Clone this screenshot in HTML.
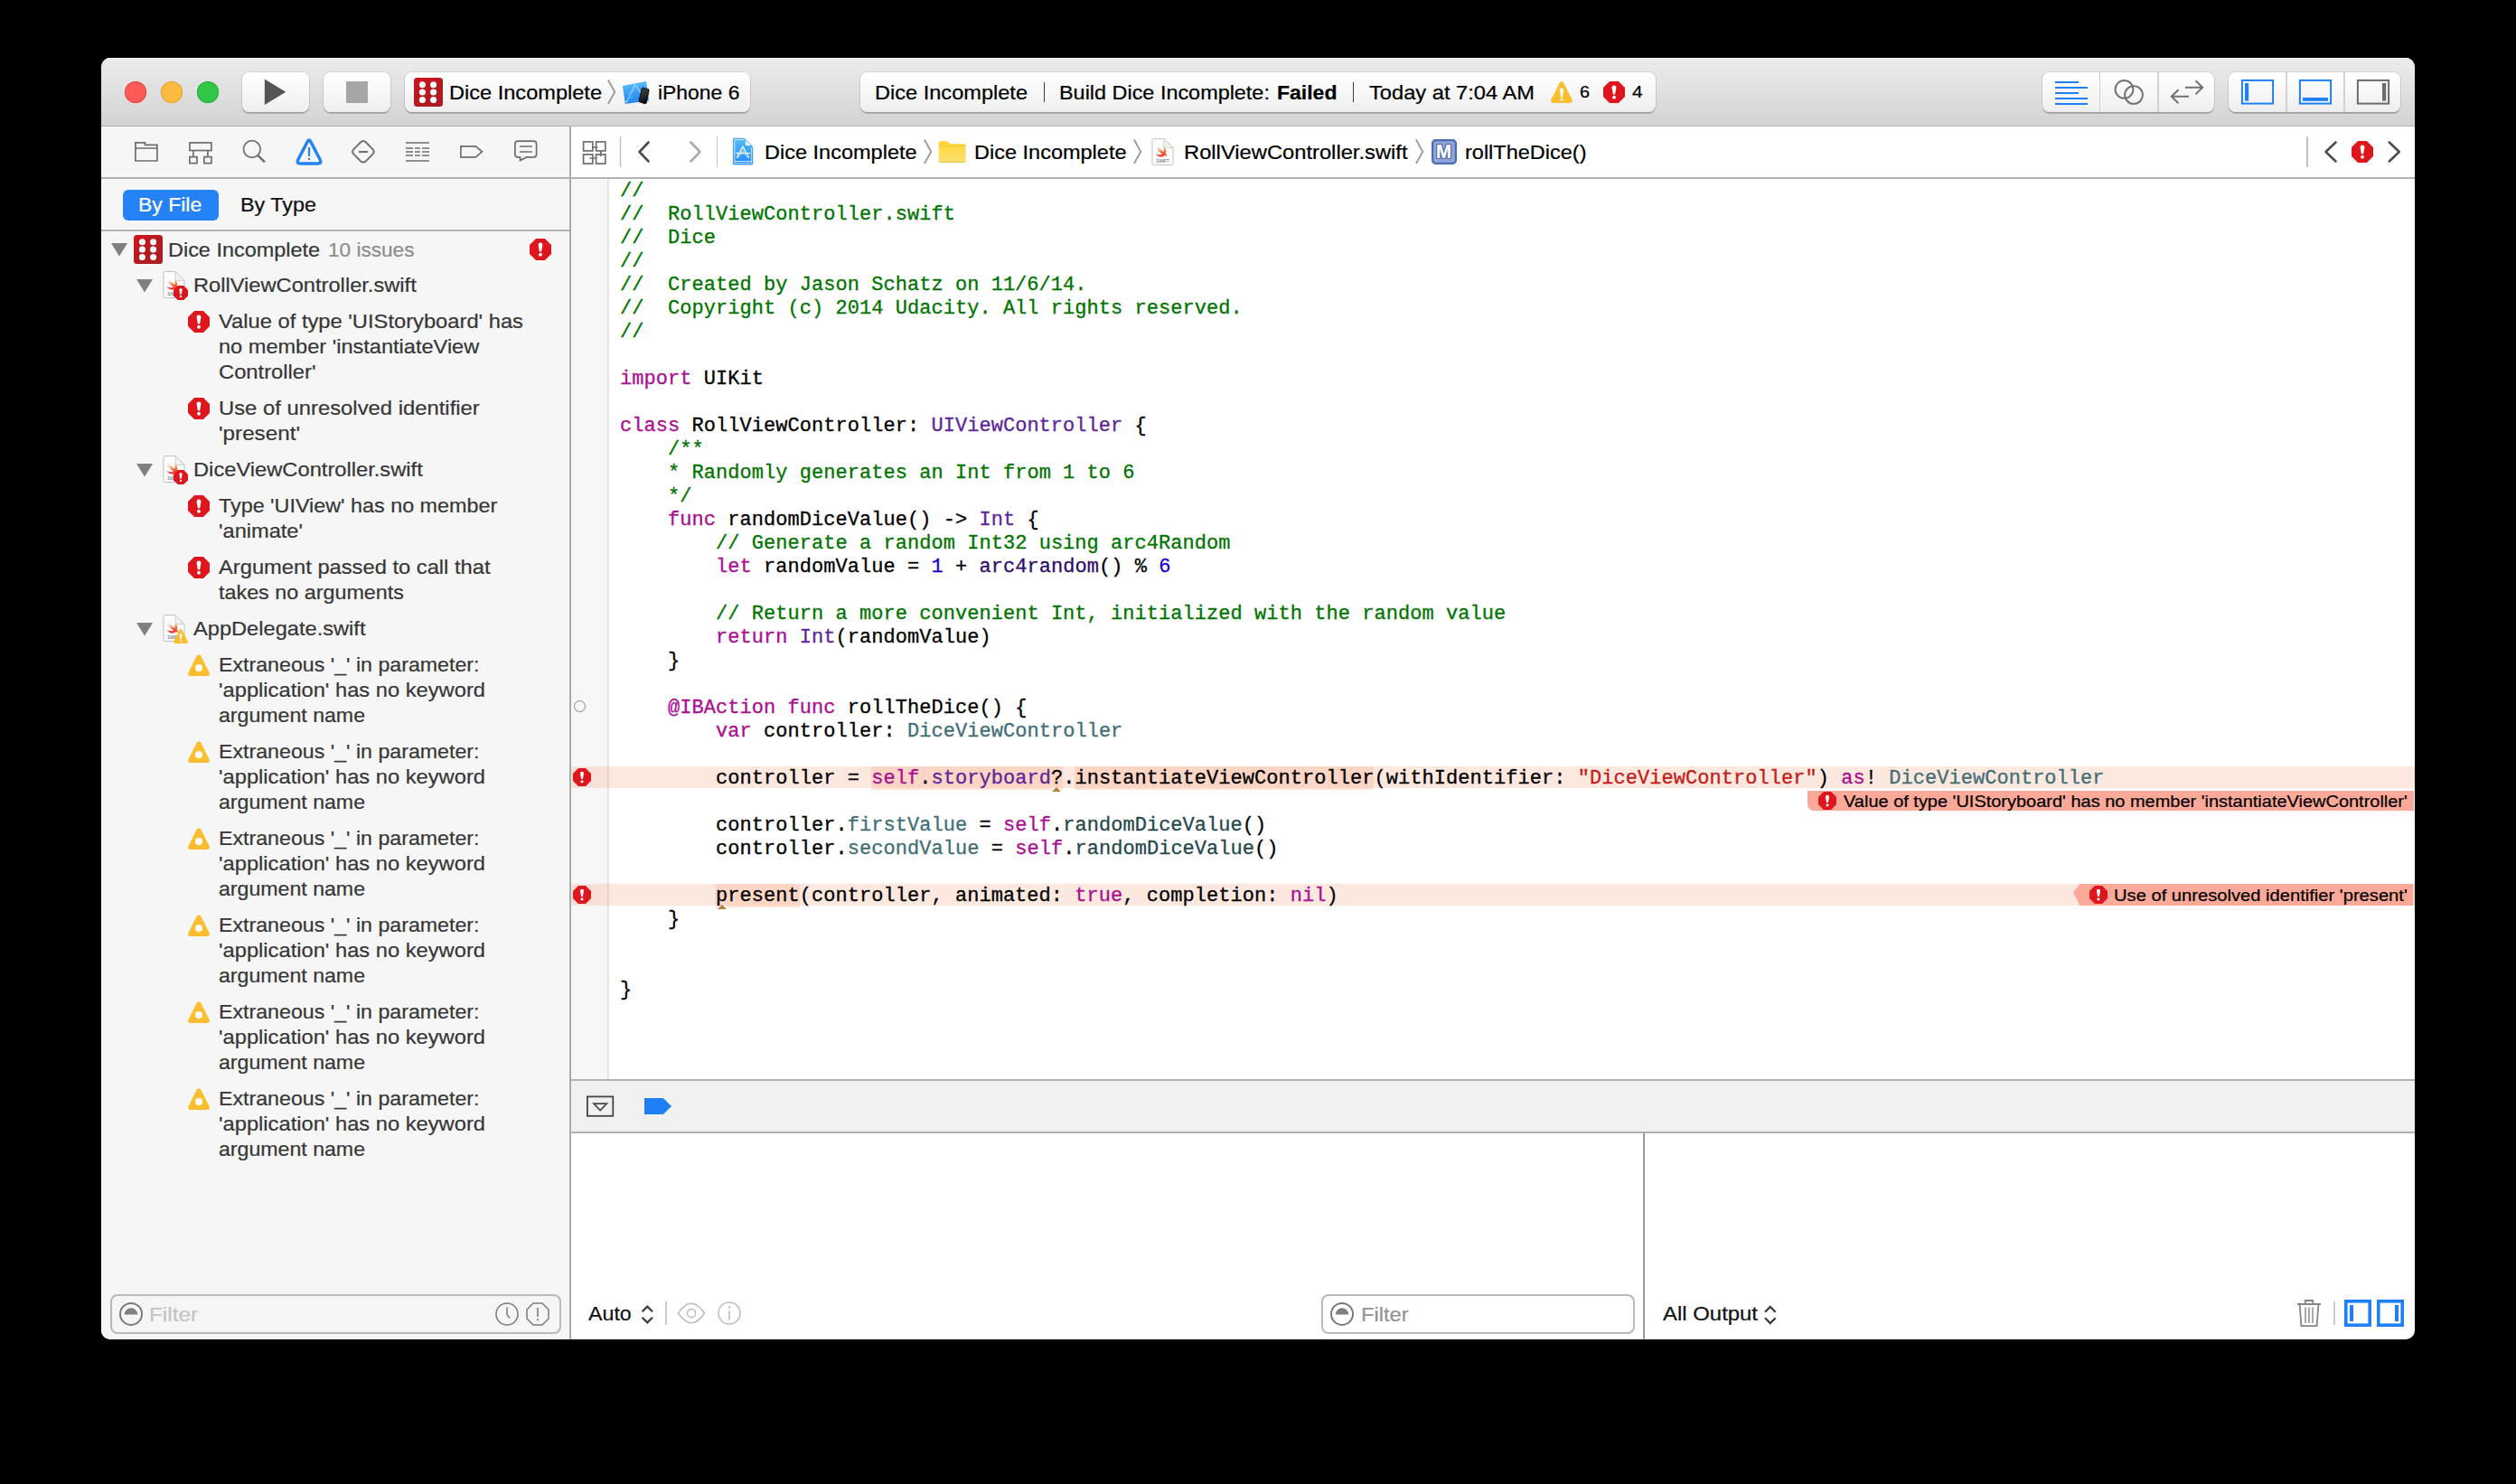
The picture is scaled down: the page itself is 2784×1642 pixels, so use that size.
<!DOCTYPE html>
<html><head><meta charset="utf-8"><title>Xcode</title>
<style>
html,body{margin:0;padding:0;background:#000;}
body{width:2784px;height:1642px;position:relative;overflow:hidden;font-family:"Liberation Sans",sans-serif;}
.ab{position:absolute;}
.t{white-space:pre;-webkit-text-stroke:0.22px;}
#win{position:absolute;left:112px;top:64px;width:2560px;height:1418px;border-radius:10px;overflow:hidden;background:#fff;}
#in{position:absolute;left:-112px;top:-64px;width:2784px;height:1642px;}
#tb{left:112px;top:64px;width:2560px;height:75px;background:linear-gradient(#ececec,#d3d3d3);box-shadow:inset 0 1px 0 #f6f6f6;}
.btn{position:absolute;top:80px;height:44px;border-radius:8px;background:linear-gradient(#ffffff,#f9f9f9 40%,#eeeeee);box-shadow:0 0 0 1px rgba(0,0,0,0.09),0 1.2px 0.8px rgba(0,0,0,0.2);}
.seg{position:absolute;top:0;width:1.8px;height:44px;background:#d2d2d2;}
#nav{left:112px;top:140px;width:519px;height:1342px;background:#f6f6f6;}
.hl{position:absolute;height:2px;background:#b3b3b3;}
.vl{position:absolute;width:2px;background:#ababab;}
.nt{color:#363636;font-size:22px;line-height:28px;white-space:pre;position:absolute;transform-origin:0 50%;-webkit-text-stroke:0.22px;}
pre#code{position:absolute;left:686px;top:199.3px;margin:0;font-family:"Liberation Mono",monospace;font-size:22px;line-height:26px;letter-spacing:0.044px;color:#000;-webkit-text-stroke:0.3px;}
.c{color:#007400}.k{color:#aa0d91}.ty{color:#5c2699}.fn{color:#2e0d6e}.pt{color:#3f6e74}.pf{color:#26474b}.n{color:#1c00cf}.s{color:#c41a16}
.rh{background:rgba(250,180,150,0.36);}
</style></head><body><div id="win"><div id="in">

<div class="ab" id="tb"></div>
<div class="ab" style="left:112px;top:138.6px;width:2560px;height:1.4px;background:#b0b0b0"></div>
<div class="ab" style="left:138px;top:90px;width:24px;height:24px;border-radius:12px;background:#fc5b57;box-shadow:inset 0 0 0 1px #e2443f"></div>
<div class="ab" style="left:178px;top:90px;width:24px;height:24px;border-radius:12px;background:#fdbc40;box-shadow:inset 0 0 0 1px #e0a133"></div>
<div class="ab" style="left:218px;top:90px;width:24px;height:24px;border-radius:12px;background:#33c748;box-shadow:inset 0 0 0 1px #27ab35"></div>
<div class="btn" style="left:268px;width:74px"><svg class="ab" style="left:24px;top:7px" width="26" height="30" viewBox="0 0 26 30"><polygon points="0.8,0.5 24.3,14.8 0.8,29" fill="#555"/></svg></div>
<div class="btn" style="left:358px;width:74px"><div class="ab" style="left:25px;top:10px;width:24px;height:24px;background:#a6a6a6"></div></div>
<div class="btn" style="left:448px;width:382px"></div>
<svg class="ab" style="left:458px;top:86px" width="32" height="32" viewBox="0 0 32 32"><defs><linearGradient id="dg45886" x1="0" y1="0" x2="1" y2="1"><stop offset="0" stop-color="#d3141d"/><stop offset="0.5" stop-color="#b51a20"/><stop offset="1" stop-color="#a91c22"/></linearGradient></defs><rect width="32" height="32" rx="3.5" fill="url(#dg45886)"/><g fill="#fff"><circle cx="9.4" cy="7.7" r="3.5"/><circle cx="21.6" cy="7.7" r="3.5"/><circle cx="9.4" cy="16" r="3.5"/><circle cx="21.6" cy="16" r="3.5"/><circle cx="9.4" cy="24.4" r="3.5"/><circle cx="21.6" cy="24.4" r="3.5"/></g></svg>
<div class="ab t " style="left:497.46px;top:87.8px;font-size:22px;color:#000;line-height:30px;transform:scaleX(1.0713);transform-origin:0 50%;">Dice Incomplete</div>
<svg class="ab" style="left:672px;top:88px" width="9.4" height="27.5" viewBox="0 0 9.4 27.5"><polyline points="0.9,0.4 8.25,13.75 0.9,27.1" fill="none" stroke="#a0a0a0" stroke-width="2.0"/></svg>
<svg class="ab" style="left:686px;top:86px" width="36" height="32" viewBox="686 86 36 32"><defs><linearGradient id="ip" x1="0" y1="0" x2="0.15" y2="1"><stop offset="0" stop-color="#5fc6fc"/><stop offset="0.45" stop-color="#3fa4f8"/><stop offset="1" stop-color="#1c82f5"/></linearGradient><linearGradient id="ph" x1="0" y1="0" x2="0.3" y2="1"><stop offset="0" stop-color="#141414"/><stop offset="0.25" stop-color="#3b3b3d"/><stop offset="0.7" stop-color="#232325"/><stop offset="1" stop-color="#050505"/></linearGradient></defs><polygon points="688.9,94.9 715,90 718,111.3 691.9,115.1" fill="url(#ip)"/><g stroke="#d3ecff" fill="none" opacity="0.45"><path d="M693.6 112.6 L702.6 93.8 L709.5 103.6" stroke-width="1.7"/><path d="M694.4 104.4 Q697 100.6 702 100.2 M697.4 108.6 L700.2 107.2" stroke-width="1"/><path d="M696 111.2 H707.5" stroke-width="0.7" opacity="0.6"/></g><rect x="692.6" y="111.6" width="1.6" height="1.8" fill="#eaf5ff"/><path d="M711.6 97.2 L717.2 98.6 Q718.3 99 718.1 100.2 L715.2 113.8 Q714.9 115 713.7 114.7 L708 112.9 Q706.8 112.5 707.1 111.3 L710.2 98 Q710.5 96.9 711.6 97.2 Z" fill="url(#ph)" stroke="#0a0604" stroke-width="0.9"/></svg>
<div class="ab t " style="left:727.75px;top:87.8px;font-size:22px;color:#000;line-height:30px;transform:scaleX(1.0414);transform-origin:0 50%;">iPhone 6</div>
<div class="btn" style="left:952px;width:880px"></div>
<div class="ab t " style="left:967.71px;top:87.8px;font-size:22px;color:#000;line-height:30px;transform:scaleX(1.0713);transform-origin:0 50%;">Dice Incomplete</div>
<div class="ab" style="left:1154.5px;top:91px;width:1.5px;height:22px;background:#3a3a3a"></div>
<div class="ab t " style="left:1171.72px;top:87.8px;font-size:22px;color:#000;line-height:30px;transform:scaleX(1.064);transform-origin:0 50%;">Build Dice Incomplete:</div>
<div class="ab t " style="left:1412.75px;top:87.8px;font-size:22px;color:#000;line-height:30px;transform:scaleX(1.0454);transform-origin:0 50%;font-weight:bold;">Failed</div>
<div class="ab" style="left:1496.5px;top:91px;width:1.5px;height:22px;background:#3a3a3a"></div>
<div class="ab t " style="left:1515.28px;top:87.8px;font-size:22px;color:#000;line-height:30px;transform:scaleX(1.0761);transform-origin:0 50%;">Today at 7:04 AM</div>
<svg class="ab" style="left:1716px;top:90px" width="24" height="24" viewBox="0 0 24 24"><path d="M12 2.9 L21.3 21.3 L2.7 21.3 Z" fill="#fcbd2e" stroke="#fcbd2e" stroke-width="5.2" stroke-linejoin="round"/><path d="M10 9.6 Q10 7.2 12 7.2 Q14 7.2 14 9.6 L13 17.4 L11 17.4 Z" fill="#fff"/><rect x="10.5" y="18.7" width="3" height="2.8" rx="1" fill="#fff"/></svg>
<div class="ab t " style="left:1747.92px;top:86.8px;font-size:18px;color:#000;line-height:30px;transform:scaleX(1.1048);transform-origin:0 50%;">6</div>
<svg class="ab" style="left:1774px;top:90px" width="24" height="24" viewBox="0 0 24 24"><polygon points="7.1,0 16.9,0 24,7.1 24,16.9 16.9,24 7.1,24 0,16.9 0,7.1" fill="#de161e"/><path d="M9.6 7 Q9.6 4.4 12 4.4 Q14.4 4.4 14.4 7 L13.1 14.5 L10.9 14.5 Z" fill="#fff"/><rect x="10.3" y="16.1" width="3.4" height="3.3" rx="1.2" fill="#fff"/></svg>
<div class="ab t " style="left:1805.56px;top:86.8px;font-size:18px;color:#000;line-height:30px;transform:scaleX(1.1612);transform-origin:0 50%;">4</div>
<div class="btn" style="left:2260px;width:190px"><div class="seg" style="left:62.6px"></div><div class="seg" style="left:126.8px"></div></div>
<svg class="ab" style="left:2272px;top:88px" width="40" height="30" viewBox="2272 88 40 30"><g stroke="#1f7ff6" stroke-width="1.9"><path d="M2274 91H2300M2274 97H2310M2274 103H2300M2274 109H2310M2274 115H2310"/></g></svg>
<svg class="ab" style="left:2336px;top:84px" width="40" height="36" viewBox="2336 84 40 36"><g stroke="#707070" stroke-width="1.9" fill="none"><circle cx="2350.5" cy="98.9" r="9.9"/><circle cx="2361" cy="105" r="9.9"/></g></svg>
<svg class="ab" style="left:2398px;top:84px" width="44" height="36" viewBox="2398 84 44 36"><g stroke="#707070" stroke-width="1.9" fill="none"><path d="M2418 96.8H2437M2429.5 89.3L2437.2 96.8L2429.5 104.3"/><path d="M2422 106.8H2403M2410.5 99.3L2402.8 106.8L2410.5 114.3"/></g></svg>
<div class="btn" style="left:2466px;width:190px"><div class="seg" style="left:62.8px"></div><div class="seg" style="left:127px"></div></div>
<svg class="ab" style="left:2476px;top:84px" width="172" height="36" viewBox="2476 84 172 36"><g fill="none" stroke-width="2"><rect x="2480.9" y="88.9" width="34.2" height="25.7" stroke="#1f7ff6"/><rect x="2544.9" y="88.9" width="34.2" height="25.7" stroke="#1f7ff6"/><rect x="2608.9" y="88.9" width="34.2" height="25.7" stroke="#6b6b6b"/></g><rect x="2484" y="92" width="4.2" height="19.6" fill="#1f7ff6"/><rect x="2548" y="108" width="28" height="3.8" fill="#1f7ff6"/><rect x="2636" y="92" width="4.2" height="19.6" fill="#6b6b6b"/></svg>
<div class="ab" id="nav"></div>
<div class="vl" style="left:630px;top:140px;height:1342px"></div>
<div class="hl" style="left:112px;top:196px;width:518px"></div>
<div class="hl" style="left:112px;top:254px;width:518px"></div>
<svg class="ab" style="left:140px;top:148px" width="470" height="40" viewBox="140 148 470 40"><g fill="none" stroke="#6e6e6e" stroke-width="1.7">
<path d="M149.9 178 V157.9 H160.4 V160.3 H173.9 V178 Z M149.9 164 H173.9"/>
<rect x="209.9" y="157.9" width="24" height="8.6"/><rect x="209.9" y="173.6" width="8" height="7"/><rect x="225.9" y="173.6" width="8" height="7"/><path d="M213.9 166.5V173.6M229.9 166.5V173.6"/>
<circle cx="278.8" cy="165" r="9.3"/><path d="M285.2 171.8 L293 179.4" stroke-width="2.4"/>
<path d="M397 167.95H407" stroke-width="1.9"/><path d="M398.90 157.50 Q401.9 154.5 404.90 157.50 L412.20 164.80 Q415.2 167.8 412.20 170.80 L404.90 178.10 Q401.9 181.10000000000002 398.90 178.10 L391.60 170.80 Q388.59999999999997 167.8 391.60 164.80 Z" stroke-width="1.9"/>
<path d="M449 158H475M449 178H475" /><path d="M449 164H457M459 164H465M467 164H475M449 168H457M459 168H465M467 168H475M449 172H457M459 172H465M467 172H475"/>
<path d="M509.9 161.9 H526.4 L533.4 167.8 L526.4 173.8 H509.9 Z"/>
<path d="M573 156.2 H590.5 Q593.6 156.2 593.6 159.3 V170.8 Q593.6 173.9 590.5 173.9 H582.5 L575.6 177.6 V173.9 H573 Q569.9 173.9 569.9 170.8 V159.3 Q569.9 156.2 573 156.2 Z"/><path d="M575 162H588.8M575 168H588.8"/>
</g>
<g fill="none" stroke="#2383f6"><path d="M340.34 156.49 Q342 153.3 343.66 156.49 L354.10 176.49 Q356.5 181.1 351.30 181.10 L332.70 181.10 Q327.5 181.1 329.90 176.49 Z" stroke-width="3.5" stroke-linejoin="round"/><path d="M342 162.9V172.9" stroke-width="2.1"/><rect x="340.95" y="175" width="2.1" height="2.1" fill="#2383f6" stroke="none"/></g>
</svg>
<div class="ab" style="left:136px;top:210px;width:106px;height:34px;border-radius:6px;background:#2581f6"></div>
<div class="ab t " style="left:153.25px;top:211.9px;font-size:22px;color:#fff;line-height:30px;transform:scaleX(1.044);transform-origin:0 50%;">By File</div>
<div class="ab t " style="left:266.23px;top:211.9px;font-size:22px;color:#111;line-height:30px;transform:scaleX(1.0619);transform-origin:0 50%;">By Type</div>
<svg class="ab" style="left:123px;top:269px" width="18" height="14.5" viewBox="0 0 18 14.5"><polygon points="0,0 18,0 9.0,14.5" fill="#808080"/></svg>
<svg class="ab" style="left:148px;top:260px" width="32" height="32" viewBox="0 0 32 32"><defs><linearGradient id="dg148260" x1="0" y1="0" x2="1" y2="1"><stop offset="0" stop-color="#d3141d"/><stop offset="0.5" stop-color="#b51a20"/><stop offset="1" stop-color="#a91c22"/></linearGradient></defs><rect width="32" height="32" rx="3.5" fill="url(#dg148260)"/><g fill="#fff"><circle cx="9.4" cy="7.7" r="3.5"/><circle cx="21.6" cy="7.7" r="3.5"/><circle cx="9.4" cy="16" r="3.5"/><circle cx="21.6" cy="16" r="3.5"/><circle cx="9.4" cy="24.4" r="3.5"/><circle cx="21.6" cy="24.4" r="3.5"/></g></svg>
<div class="nt" style="left:185.7px;top:262.5px;transform:scaleX(1.065)">Dice Incomplete</div>
<div class="nt" style="left:362.5px;top:262.5px;color:#8c8c8c;transform:scaleX(1.0274)">10 issues</div>
<svg class="ab" style="left:586px;top:264px" width="24" height="24" viewBox="0 0 24 24"><polygon points="7.1,0 16.9,0 24,7.1 24,16.9 16.9,24 7.1,24 0,16.9 0,7.1" fill="#de161e"/><path d="M9.6 7 Q9.6 4.4 12 4.4 Q14.4 4.4 14.4 7 L13.1 14.5 L10.9 14.5 Z" fill="#fff"/><rect x="10.3" y="16.1" width="3.4" height="3.3" rx="1.2" fill="#fff"/></svg>
<svg class="ab" style="left:151px;top:309px" width="18" height="14.5" viewBox="0 0 18 14.5"><polygon points="0,0 18,0 9.0,14.5" fill="#808080"/></svg>
<svg class="ab" style="left:180.3px;top:299.4px" width="25.5" height="32" viewBox="-1 -1 25.5 32"><defs><linearGradient id="sw180_299" x1="0.7" y1="0" x2="0.3" y2="1"><stop offset="0" stop-color="#fc9a3c"/><stop offset="0.55" stop-color="#f9512f"/><stop offset="1" stop-color="#f3262b"/></linearGradient></defs><path d="M1.2 0.5 H13 L23 10.5 V28.3 Q23 29.5 21.8 29.5 H1.2 Q0 29.5 0 28.3 V1.7 Q0 0.5 1.2 0.5 Z" fill="#fdfdfd" stroke="#c2c2c2" stroke-width="1"/><path d="M13 0.5 V8.8 Q13 10.5 14.7 10.5 H23 Z" fill="#f1f1f1" stroke="#c6c6c6" stroke-width="0.8"/><g transform="translate(3.5,8.1) scale(0.145)"><path d="M62 8 C78 22 86 44 78 62 C84 68 90 78 88 86 C84 78 78 74 72 76 C60 86 40 90 24 82 C14 77 6 68 2 60 C18 72 38 74 52 64 C36 52 20 36 8 18 C22 32 38 44 50 52 C38 40 26 26 18 12 C32 26 48 40 60 48 C66 36 66 20 62 8 Z" fill="url(#sw180_299)"/></g><text x="11.5" y="26.8" font-family="Liberation Sans" font-size="4.8" fill="#5a5a5a" text-anchor="middle" letter-spacing="-0.1">SWIFT</text></svg>
<svg class="ab" style="left:192px;top:316px" width="16" height="16" viewBox="0 0 24 24"><polygon points="7.1,0 16.9,0 24,7.1 24,16.9 16.9,24 7.1,24 0,16.9 0,7.1" fill="#de161e"/><path d="M9.6 7 Q9.6 4.4 12 4.4 Q14.4 4.4 14.4 7 L13.1 14.5 L10.9 14.5 Z" fill="#fff"/><rect x="10.3" y="16.1" width="3.4" height="3.3" rx="1.2" fill="#fff"/></svg>
<div class="nt" style="left:213.8px;top:302.4px;transform:scaleX(1.0754)">RollViewController.swift</div>
<svg class="ab" style="left:208px;top:344px" width="24" height="24" viewBox="0 0 24 24"><polygon points="7.1,0 16.9,0 24,7.1 24,16.9 16.9,24 7.1,24 0,16.9 0,7.1" fill="#de161e"/><path d="M9.6 7 Q9.6 4.4 12 4.4 Q14.4 4.4 14.4 7 L13.1 14.5 L10.9 14.5 Z" fill="#fff"/><rect x="10.3" y="16.1" width="3.4" height="3.3" rx="1.2" fill="#fff"/></svg>
<div class="nt" style="left:241.7px;top:342.4px;transform:scaleX(1.0783)">Value of type 'UIStoryboard' has</div><div class="nt" style="left:241.7px;top:370.4px;transform:scaleX(1.0709)">no member 'instantiateView</div><div class="nt" style="left:241.7px;top:398.4px;transform:scaleX(1.0796)">Controller'</div>
<svg class="ab" style="left:208px;top:440px" width="24" height="24" viewBox="0 0 24 24"><polygon points="7.1,0 16.9,0 24,7.1 24,16.9 16.9,24 7.1,24 0,16.9 0,7.1" fill="#de161e"/><path d="M9.6 7 Q9.6 4.4 12 4.4 Q14.4 4.4 14.4 7 L13.1 14.5 L10.9 14.5 Z" fill="#fff"/><rect x="10.3" y="16.1" width="3.4" height="3.3" rx="1.2" fill="#fff"/></svg>
<div class="nt" style="left:241.7px;top:438.4px;transform:scaleX(1.0831)">Use of unresolved identifier</div><div class="nt" style="left:241.7px;top:466.4px;transform:scaleX(1.1005)">'present'</div>
<svg class="ab" style="left:151px;top:513px" width="18" height="14.5" viewBox="0 0 18 14.5"><polygon points="0,0 18,0 9.0,14.5" fill="#808080"/></svg>
<svg class="ab" style="left:180.3px;top:503.4px" width="25.5" height="32" viewBox="-1 -1 25.5 32"><defs><linearGradient id="sw180_503" x1="0.7" y1="0" x2="0.3" y2="1"><stop offset="0" stop-color="#fc9a3c"/><stop offset="0.55" stop-color="#f9512f"/><stop offset="1" stop-color="#f3262b"/></linearGradient></defs><path d="M1.2 0.5 H13 L23 10.5 V28.3 Q23 29.5 21.8 29.5 H1.2 Q0 29.5 0 28.3 V1.7 Q0 0.5 1.2 0.5 Z" fill="#fdfdfd" stroke="#c2c2c2" stroke-width="1"/><path d="M13 0.5 V8.8 Q13 10.5 14.7 10.5 H23 Z" fill="#f1f1f1" stroke="#c6c6c6" stroke-width="0.8"/><g transform="translate(3.5,8.1) scale(0.145)"><path d="M62 8 C78 22 86 44 78 62 C84 68 90 78 88 86 C84 78 78 74 72 76 C60 86 40 90 24 82 C14 77 6 68 2 60 C18 72 38 74 52 64 C36 52 20 36 8 18 C22 32 38 44 50 52 C38 40 26 26 18 12 C32 26 48 40 60 48 C66 36 66 20 62 8 Z" fill="url(#sw180_503)"/></g><text x="11.5" y="26.8" font-family="Liberation Sans" font-size="4.8" fill="#5a5a5a" text-anchor="middle" letter-spacing="-0.1">SWIFT</text></svg>
<svg class="ab" style="left:192px;top:520px" width="16" height="16" viewBox="0 0 24 24"><polygon points="7.1,0 16.9,0 24,7.1 24,16.9 16.9,24 7.1,24 0,16.9 0,7.1" fill="#de161e"/><path d="M9.6 7 Q9.6 4.4 12 4.4 Q14.4 4.4 14.4 7 L13.1 14.5 L10.9 14.5 Z" fill="#fff"/><rect x="10.3" y="16.1" width="3.4" height="3.3" rx="1.2" fill="#fff"/></svg>
<div class="nt" style="left:213.8px;top:506.4px;transform:scaleX(1.0771)">DiceViewController.swift</div>
<svg class="ab" style="left:208px;top:548px" width="24" height="24" viewBox="0 0 24 24"><polygon points="7.1,0 16.9,0 24,7.1 24,16.9 16.9,24 7.1,24 0,16.9 0,7.1" fill="#de161e"/><path d="M9.6 7 Q9.6 4.4 12 4.4 Q14.4 4.4 14.4 7 L13.1 14.5 L10.9 14.5 Z" fill="#fff"/><rect x="10.3" y="16.1" width="3.4" height="3.3" rx="1.2" fill="#fff"/></svg>
<div class="nt" style="left:241.7px;top:546.4px;transform:scaleX(1.0612)">Type 'UIView' has no member</div><div class="nt" style="left:241.7px;top:574.4px;transform:scaleX(1.073)">'animate'</div>
<svg class="ab" style="left:208px;top:616px" width="24" height="24" viewBox="0 0 24 24"><polygon points="7.1,0 16.9,0 24,7.1 24,16.9 16.9,24 7.1,24 0,16.9 0,7.1" fill="#de161e"/><path d="M9.6 7 Q9.6 4.4 12 4.4 Q14.4 4.4 14.4 7 L13.1 14.5 L10.9 14.5 Z" fill="#fff"/><rect x="10.3" y="16.1" width="3.4" height="3.3" rx="1.2" fill="#fff"/></svg>
<div class="nt" style="left:241.7px;top:614.4px;transform:scaleX(1.0777)">Argument passed to call that</div><div class="nt" style="left:241.7px;top:642.4px;transform:scaleX(1.0609)">takes no arguments</div>
<svg class="ab" style="left:151px;top:689px" width="18" height="14.5" viewBox="0 0 18 14.5"><polygon points="0,0 18,0 9.0,14.5" fill="#808080"/></svg>
<svg class="ab" style="left:180.3px;top:679.4px" width="25.5" height="32" viewBox="-1 -1 25.5 32"><defs><linearGradient id="sw180_679" x1="0.7" y1="0" x2="0.3" y2="1"><stop offset="0" stop-color="#fc9a3c"/><stop offset="0.55" stop-color="#f9512f"/><stop offset="1" stop-color="#f3262b"/></linearGradient></defs><path d="M1.2 0.5 H13 L23 10.5 V28.3 Q23 29.5 21.8 29.5 H1.2 Q0 29.5 0 28.3 V1.7 Q0 0.5 1.2 0.5 Z" fill="#fdfdfd" stroke="#c2c2c2" stroke-width="1"/><path d="M13 0.5 V8.8 Q13 10.5 14.7 10.5 H23 Z" fill="#f1f1f1" stroke="#c6c6c6" stroke-width="0.8"/><g transform="translate(3.5,8.1) scale(0.145)"><path d="M62 8 C78 22 86 44 78 62 C84 68 90 78 88 86 C84 78 78 74 72 76 C60 86 40 90 24 82 C14 77 6 68 2 60 C18 72 38 74 52 64 C36 52 20 36 8 18 C22 32 38 44 50 52 C38 40 26 26 18 12 C32 26 48 40 60 48 C66 36 66 20 62 8 Z" fill="url(#sw180_679)"/></g><text x="11.5" y="26.8" font-family="Liberation Sans" font-size="4.8" fill="#5a5a5a" text-anchor="middle" letter-spacing="-0.1">SWIFT</text></svg>
<svg class="ab" style="left:192px;top:696px" width="16" height="16" viewBox="0 0 24 24"><path d="M12 2.9 L21.3 21.3 L2.7 21.3 Z" fill="#fcbd2e" stroke="#fcbd2e" stroke-width="5.2" stroke-linejoin="round"/><path d="M10 9.6 Q10 7.2 12 7.2 Q14 7.2 14 9.6 L13 17.4 L11 17.4 Z" fill="#fff"/><rect x="10.5" y="18.7" width="3" height="2.8" rx="1" fill="#fff"/></svg>
<div class="nt" style="left:213.8px;top:682.4px;transform:scaleX(1.0743)">AppDelegate.swift</div>
<svg class="ab" style="left:208px;top:724px" width="24" height="24" viewBox="0 0 24 24"><path d="M12 2.9 L21.3 21.3 L2.7 21.3 Z" fill="#fcbd2e" stroke="#fcbd2e" stroke-width="5.2" stroke-linejoin="round"/><circle cx="12" cy="14.9" r="4" fill="#fff"/></svg>
<div class="nt" style="left:241.7px;top:722.4px;transform:scaleX(1.0538)">Extraneous '_' in parameter:</div><div class="nt" style="left:241.7px;top:750.4px;transform:scaleX(1.0774)">'application' has no keyword</div><div class="nt" style="left:241.7px;top:778.4px;transform:scaleX(1.0513)">argument name</div>
<svg class="ab" style="left:208px;top:820px" width="24" height="24" viewBox="0 0 24 24"><path d="M12 2.9 L21.3 21.3 L2.7 21.3 Z" fill="#fcbd2e" stroke="#fcbd2e" stroke-width="5.2" stroke-linejoin="round"/><circle cx="12" cy="14.9" r="4" fill="#fff"/></svg>
<div class="nt" style="left:241.7px;top:818.4px;transform:scaleX(1.0538)">Extraneous '_' in parameter:</div><div class="nt" style="left:241.7px;top:846.4px;transform:scaleX(1.0774)">'application' has no keyword</div><div class="nt" style="left:241.7px;top:874.4px;transform:scaleX(1.0513)">argument name</div>
<svg class="ab" style="left:208px;top:916px" width="24" height="24" viewBox="0 0 24 24"><path d="M12 2.9 L21.3 21.3 L2.7 21.3 Z" fill="#fcbd2e" stroke="#fcbd2e" stroke-width="5.2" stroke-linejoin="round"/><circle cx="12" cy="14.9" r="4" fill="#fff"/></svg>
<div class="nt" style="left:241.7px;top:914.4px;transform:scaleX(1.0538)">Extraneous '_' in parameter:</div><div class="nt" style="left:241.7px;top:942.4px;transform:scaleX(1.0774)">'application' has no keyword</div><div class="nt" style="left:241.7px;top:970.4px;transform:scaleX(1.0513)">argument name</div>
<svg class="ab" style="left:208px;top:1012px" width="24" height="24" viewBox="0 0 24 24"><path d="M12 2.9 L21.3 21.3 L2.7 21.3 Z" fill="#fcbd2e" stroke="#fcbd2e" stroke-width="5.2" stroke-linejoin="round"/><circle cx="12" cy="14.9" r="4" fill="#fff"/></svg>
<div class="nt" style="left:241.7px;top:1010.4px;transform:scaleX(1.0538)">Extraneous '_' in parameter:</div><div class="nt" style="left:241.7px;top:1038.4px;transform:scaleX(1.0774)">'application' has no keyword</div><div class="nt" style="left:241.7px;top:1066.4px;transform:scaleX(1.0513)">argument name</div>
<svg class="ab" style="left:208px;top:1108px" width="24" height="24" viewBox="0 0 24 24"><path d="M12 2.9 L21.3 21.3 L2.7 21.3 Z" fill="#fcbd2e" stroke="#fcbd2e" stroke-width="5.2" stroke-linejoin="round"/><circle cx="12" cy="14.9" r="4" fill="#fff"/></svg>
<div class="nt" style="left:241.7px;top:1106.4px;transform:scaleX(1.0538)">Extraneous '_' in parameter:</div><div class="nt" style="left:241.7px;top:1134.4px;transform:scaleX(1.0774)">'application' has no keyword</div><div class="nt" style="left:241.7px;top:1162.4px;transform:scaleX(1.0513)">argument name</div>
<svg class="ab" style="left:208px;top:1204px" width="24" height="24" viewBox="0 0 24 24"><path d="M12 2.9 L21.3 21.3 L2.7 21.3 Z" fill="#fcbd2e" stroke="#fcbd2e" stroke-width="5.2" stroke-linejoin="round"/><circle cx="12" cy="14.9" r="4" fill="#fff"/></svg>
<div class="nt" style="left:241.7px;top:1202.4px;transform:scaleX(1.0538)">Extraneous '_' in parameter:</div><div class="nt" style="left:241.7px;top:1230.4px;transform:scaleX(1.0774)">'application' has no keyword</div><div class="nt" style="left:241.7px;top:1258.4px;transform:scaleX(1.0513)">argument name</div>
<div class="ab" style="left:121.5px;top:1432px;width:495px;height:40px;border-radius:8px;border:2px solid #b9b9b9;background:#f5f5f5"></div>
<svg class="ab" style="left:130px;top:1439px" width="30" height="30" viewBox="0 0 30 30"><circle cx="15" cy="14.9" r="12" fill="none" stroke="#787878" stroke-width="2"/><path d="M7.7 15.6 A7.3 7.3 0 0 1 22.3 15.6 Z" fill="#7f7f7f"/></svg>
<div class="ab t " style="left:165.17px;top:1440.2px;font-size:22px;color:#c4c4c4;line-height:30px;transform:scaleX(1.1055);transform-origin:0 50%;">Filter</div>
<svg class="ab" style="left:546px;top:1439px" width="70" height="30" viewBox="546 1439 70 30"><g fill="none" stroke="#7b7b7b" stroke-width="1.5"><circle cx="561" cy="1454" r="12"/><path d="M561 1446.5V1454.5L564 1458.5"/><polygon points="590,1442 600,1442 607,1449 607,1459 600,1466 590,1466 583,1459 583,1449"/><path d="M595 1447V1457" stroke-width="1.6"/></g><rect x="594.1" y="1459.2" width="1.8" height="1.9" fill="#7b7b7b"/></svg>
<div class="hl" style="left:632px;top:196px;width:2040px"></div>
<svg class="ab" style="left:640px;top:148px" width="150" height="40" viewBox="640 148 150 40"><g fill="none" stroke="#6e6e6e" stroke-width="1.7"><rect x="645.6" y="156.9" width="10.2" height="10"/><rect x="659.6" y="156.9" width="10.2" height="10"/><rect x="645.6" y="170.9" width="10.2" height="10.2"/><rect x="659.6" y="170.9" width="10.2" height="10.2"/><path d="M655.8 163H661.5M664.8 166.9V173M652.5 175H659.6"/></g><path d="M686.5 151V185" stroke="#c2c2c2" stroke-width="1.6"/><polyline points="717.5,157.5 707.5,168 717.5,178.5" fill="none" stroke="#4d4d4d" stroke-width="2.6" stroke-linecap="round" stroke-linejoin="round"/><polyline points="764.5,157.5 774.5,168 764.5,178.5" fill="none" stroke="#ababab" stroke-width="2.6" stroke-linecap="round" stroke-linejoin="round"/></svg>
<div class="ab" style="left:792.5px;top:151px;width:1.6px;height:34px;background:#c2c2c2"></div>
<svg class="ab" style="left:809px;top:151px" width="26" height="33" viewBox="809 151 26 33"><defs><linearGradient id="pj" x1="0" y1="0" x2="0" y2="1"><stop offset="0" stop-color="#58bdf0"/><stop offset="0.5" stop-color="#3ea5f6"/><stop offset="1" stop-color="#1b87fb"/></linearGradient></defs><path d="M812.2 153.1 H822 Q824 153.1 825.2 154.6 L831.6 161 Q832.8 162.4 832.8 164.2 V181.2 Q832.8 182 832 182 H812.2 Q811.4 182 811.4 181.2 V153.9 Q811.4 153.1 812.2 153.1 Z" fill="url(#pj)" stroke="#3290de" stroke-width="0.7"/><path d="M824.9 155 L831.3 161 H826.2 Q824.9 161 824.9 159.7 Z" fill="#eef6fd"/><g stroke="#fff" fill="none" opacity="0.88"><path d="M823.4 154.5 H812.9 V180.6 H831.4 V163.4" stroke-width="0.8"/><path d="M812.9 178.5 H831.4" stroke-width="0.9"/><path d="M815.3 174.8 L822 162.4 L828.7 174.8 M814.2 169.6 H829.8" stroke-width="1.5"/><path d="M816.6 174.9 L823.4 166 M820.4 166 L827.2 174.9" stroke-width="0.7" opacity="0.7"/></g></svg>
<div class="ab t " style="left:845.62px;top:153.6px;font-size:22px;color:#000;line-height:30px;transform:scaleX(1.0688);transform-origin:0 50%;">Dice Incomplete</div>
<svg class="ab" style="left:1021.9px;top:154.4px" width="9.4" height="27.5" viewBox="0 0 9.4 27.5"><polyline points="0.9,0.4 8.25,13.75 0.9,27.1" fill="none" stroke="#a0a0a0" stroke-width="2.0"/></svg>
<svg class="ab" style="left:1037px;top:154px" width="34" height="28" viewBox="1037 154 34 28"><defs><linearGradient id="fo" x1="0" y1="0" x2="0" y2="1"><stop offset="0" stop-color="#fbd130"/><stop offset="0.35" stop-color="#fdd94a"/><stop offset="1" stop-color="#fce171"/></linearGradient></defs><path d="M1038.8 158 Q1038.8 156.3 1040.5 156.3 H1047.4 Q1048.6 156.3 1049.4 157.4 L1050.6 159.2 H1066.8 Q1068.5 159.2 1068.5 160.9 V178 Q1068.5 179.7 1066.8 179.7 H1040.5 Q1038.8 179.7 1038.8 178 Z" fill="url(#fo)"/><path d="M1038.8 161.4H1068.5" stroke="#efc227" stroke-width="0.9"/><path d="M1039.4 179.4H1068" stroke="#e5bd35" stroke-width="0.9"/></svg>
<div class="ab t " style="left:1077.72px;top:153.6px;font-size:22px;color:#000;line-height:30px;transform:scaleX(1.0681);transform-origin:0 50%;">Dice Incomplete</div>
<svg class="ab" style="left:1254.4px;top:154.4px" width="9.4" height="27.5" viewBox="0 0 9.4 27.5"><polyline points="0.9,0.4 8.25,13.75 0.9,27.1" fill="none" stroke="#a0a0a0" stroke-width="2.0"/></svg>
<svg class="ab" style="left:1274.4px;top:152.4px" width="25.5" height="32" viewBox="-1 -1 25.5 32"><defs><linearGradient id="sw1274_152" x1="0.7" y1="0" x2="0.3" y2="1"><stop offset="0" stop-color="#fc9a3c"/><stop offset="0.55" stop-color="#f9512f"/><stop offset="1" stop-color="#f3262b"/></linearGradient></defs><path d="M1.2 0.5 H13 L23 10.5 V28.3 Q23 29.5 21.8 29.5 H1.2 Q0 29.5 0 28.3 V1.7 Q0 0.5 1.2 0.5 Z" fill="#fdfdfd" stroke="#c2c2c2" stroke-width="1"/><path d="M13 0.5 V8.8 Q13 10.5 14.7 10.5 H23 Z" fill="#f1f1f1" stroke="#c6c6c6" stroke-width="0.8"/><g transform="translate(3.5,8.1) scale(0.145)"><path d="M62 8 C78 22 86 44 78 62 C84 68 90 78 88 86 C84 78 78 74 72 76 C60 86 40 90 24 82 C14 77 6 68 2 60 C18 72 38 74 52 64 C36 52 20 36 8 18 C22 32 38 44 50 52 C38 40 26 26 18 12 C32 26 48 40 60 48 C66 36 66 20 62 8 Z" fill="url(#sw1274_152)"/></g><text x="11.5" y="26.8" font-family="Liberation Sans" font-size="4.8" fill="#5a5a5a" text-anchor="middle" letter-spacing="-0.1">SWIFT</text></svg>
<div class="ab t " style="left:1309.71px;top:153.6px;font-size:22px;color:#000;line-height:30px;transform:scaleX(1.0787);transform-origin:0 50%;">RollViewController.swift</div>
<svg class="ab" style="left:1566.2px;top:154.3px" width="9.4" height="27.5" viewBox="0 0 9.4 27.5"><polyline points="0.9,0.4 8.25,13.75 0.9,27.1" fill="none" stroke="#a0a0a0" stroke-width="2.0"/></svg>
<div class="ab" style="left:1584px;top:153.9px;width:28px;height:28px;border-radius:5px;background:#93a4d7;box-shadow:inset 0 0 0 2.2px #486db6;"></div>
<div class="ab t" style="left:1588.9px;top:153px;font-size:22px;line-height:30px;font-weight:bold;color:#fff;transform:scaleX(0.93);transform-origin:0 50%;text-shadow:1.2px 0 0 #4f66ae,-1.2px 0 0 #4f66ae,0 1.2px 0 #4f66ae,0 -1.2px 0 #4f66ae,1px 1px 0 #4f66ae,-1px 1px 0 #4f66ae,1px -1px 0 #4f66ae,-1px -1px 0 #4f66ae">M</div>
<div class="ab t " style="left:1621.22px;top:153.6px;font-size:22px;color:#000;line-height:30px;transform:scaleX(1.0681);transform-origin:0 50%;">rollTheDice()</div>
<div class="ab" style="left:2552.2px;top:151px;width:1.6px;height:34px;background:#c2c2c2"></div>
<svg class="ab" style="left:2566px;top:150px" width="96" height="36" viewBox="2566 150 96 36"><polyline points="2584.5,157.5 2573.5,168 2584.5,178.5" fill="none" stroke="#4d4d4d" stroke-width="2.6" stroke-linecap="round" stroke-linejoin="round"/><polyline points="2643.8,157.5 2654.8,168 2643.8,178.5" fill="none" stroke="#4d4d4d" stroke-width="2.6" stroke-linecap="round" stroke-linejoin="round"/></svg>
<svg class="ab" style="left:2602px;top:156px" width="24" height="24" viewBox="0 0 24 24"><polygon points="7.1,0 16.9,0 24,7.1 24,16.9 16.9,24 7.1,24 0,16.9 0,7.1" fill="#de161e"/><path d="M9.6 7 Q9.6 4.4 12 4.4 Q14.4 4.4 14.4 7 L13.1 14.5 L10.9 14.5 Z" fill="#fff"/><rect x="10.3" y="16.1" width="3.4" height="3.3" rx="1.2" fill="#fff"/></svg>
<div class="ab" style="left:632px;top:198px;width:41px;height:996px;background:#f7f7f7"></div>
<div class="ab" style="left:632px;top:848px;width:2040px;height:24px;background:#fde8e0"></div>
<div class="ab" style="left:632px;top:848px;width:40.4px;height:24px;background:#f6e0d8"></div>
<svg class="ab" style="left:634px;top:850px" width="20" height="20" viewBox="0 0 24 24"><polygon points="7.1,0 16.9,0 24,7.1 24,16.9 16.9,24 7.1,24 0,16.9 0,7.1" fill="#de161e"/><path d="M9.6 7 Q9.6 4.4 12 4.4 Q14.4 4.4 14.4 7 L13.1 14.5 L10.9 14.5 Z" fill="#fff"/><rect x="10.3" y="16.1" width="3.4" height="3.3" rx="1.2" fill="#fff"/></svg>
<div class="ab" style="left:632px;top:978px;width:2040px;height:24px;background:#fde8e0"></div>
<div class="ab" style="left:632px;top:978px;width:40.4px;height:24px;background:#f6e0d8"></div>
<svg class="ab" style="left:634px;top:980px" width="20" height="20" viewBox="0 0 24 24"><polygon points="7.1,0 16.9,0 24,7.1 24,16.9 16.9,24 7.1,24 0,16.9 0,7.1" fill="#de161e"/><path d="M9.6 7 Q9.6 4.4 12 4.4 Q14.4 4.4 14.4 7 L13.1 14.5 L10.9 14.5 Z" fill="#fff"/><rect x="10.3" y="16.1" width="3.4" height="3.3" rx="1.2" fill="#fff"/></svg>
<div class="ab" style="left:672.2px;top:198px;width:1.7px;height:996px;background:rgba(0,0,0,0.085)"></div>
<div class="ab" style="left:634.7px;top:774.75px;width:11.5px;height:11.5px;border-radius:8px;border:1.6px solid #868686;background:#f8f8f8"></div>
<div class="ab rh" style="left:964.1px;top:848px;width:211.9px;height:26px"></div>
<div class="ab rh" style="left:1189.3px;top:848px;width:331.1px;height:26px"></div>
<div class="ab rh" style="left:792.0px;top:978px;width:92.7px;height:26px"></div>
<svg class="ab" style="left:1163.1px;top:870px" width="12" height="7" viewBox="0 0 12 7"><circle cx="2.2" cy="2.6" r="1.2" fill="#fff"/><circle cx="9.8" cy="2.6" r="1.2" fill="#fff"/><polygon points="1,6 6,1 11,6" fill="#b78338"/></svg>
<svg class="ab" style="left:793px;top:1000px" width="12" height="7" viewBox="0 0 12 7"><circle cx="2.2" cy="2.6" r="1.2" fill="#fff"/><circle cx="9.8" cy="2.6" r="1.2" fill="#fff"/><polygon points="1,6 6,1 11,6" fill="#b78338"/></svg>
<pre id="code"><span class="c">//</span>
<span class="c">//  RollViewController.swift</span>
<span class="c">//  Dice</span>
<span class="c">//</span>
<span class="c">//  Created by Jason Schatz on 11/6/14.</span>
<span class="c">//  Copyright (c) 2014 Udacity. All rights reserved.</span>
<span class="c">//</span>

<span class="k">import</span> UIKit

<span class="k">class</span> RollViewController: <span class="ty">UIViewController</span> {
    <span class="c">/**</span>
    <span class="c">* Randomly generates an Int from 1 to 6</span>
    <span class="c">*/</span>
    <span class="k">func</span> randomDiceValue() -&gt; <span class="ty">Int</span> {
        <span class="c">// Generate a random Int32 using arc4Random</span>
        <span class="k">let</span> randomValue = <span class="n">1</span> + <span class="fn">arc4random</span>() % <span class="n">6</span>

        <span class="c">// Return a more convenient Int, initialized with the random value</span>
        <span class="k">return</span> <span class="ty">Int</span>(randomValue)
    }

    <span class="k">@IBAction</span> <span class="k">func</span> rollTheDice() {
        <span class="k">var</span> controller: <span class="pt">DiceViewController</span>

        controller = <span class="k">self</span>.<span class="ty">storyboard</span>?.instantiateViewController(withIdentifier: <span class="s">"DiceViewController"</span>) <span class="k">as</span>! <span class="pt">DiceViewController</span>

        controller.<span class="pt">firstValue</span> = <span class="k">self</span>.<span class="pf">randomDiceValue</span>()
        controller.<span class="pt">secondValue</span> = <span class="k">self</span>.<span class="pf">randomDiceValue</span>()

        present(controller, animated: <span class="k">true</span>, completion: <span class="k">nil</span>)
    }


}</pre>
<div class="ab" style="left:2000px;top:874.5px;width:670.5px;height:22.5px;background:#fca999;border-radius:0 0 0 7px"></div>
<svg class="ab" style="left:2012px;top:876px" width="20" height="20" viewBox="0 0 24 24"><polygon points="7.1,0 16.9,0 24,7.1 24,16.9 16.9,24 7.1,24 0,16.9 0,7.1" fill="#de161e"/><path d="M9.6 7 Q9.6 4.4 12 4.4 Q14.4 4.4 14.4 7 L13.1 14.5 L10.9 14.5 Z" fill="#fff"/><rect x="10.3" y="16.1" width="3.4" height="3.3" rx="1.2" fill="#fff"/></svg>
<div class="ab t " style="left:2039.82px;top:871.8px;font-size:18px;color:#000;line-height:30px;transform:scaleX(1.1093);transform-origin:0 50%;">Value of type 'UIStoryboard' has no member 'instantiateViewController'</div>
<svg class="ab" style="left:2293px;top:978px" width="377.5" height="24" viewBox="0 0 377.5 24"><polygon points="1,9 8.5,0 377.5,0 377.5,24 8.5,24" fill="#fca999"/></svg>
<svg class="ab" style="left:2312px;top:980px" width="20" height="20" viewBox="0 0 24 24"><polygon points="7.1,0 16.9,0 24,7.1 24,16.9 16.9,24 7.1,24 0,16.9 0,7.1" fill="#de161e"/><path d="M9.6 7 Q9.6 4.4 12 4.4 Q14.4 4.4 14.4 7 L13.1 14.5 L10.9 14.5 Z" fill="#fff"/><rect x="10.3" y="16.1" width="3.4" height="3.3" rx="1.2" fill="#fff"/></svg>
<div class="ab t " style="left:2339.4px;top:976.0px;font-size:18px;color:#000;line-height:30px;transform:scaleX(1.1198);transform-origin:0 50%;">Use of unresolved identifier 'present'</div>
<div class="ab" style="left:632px;top:1196px;width:2040px;height:56px;background:#f0f0f0"></div>
<div class="hl" style="left:632px;top:1194px;width:2040px"></div>
<div class="hl" style="left:632px;top:1251.5px;width:2040px"></div>
<svg class="ab" style="left:645px;top:1208px" width="104" height="32" viewBox="645 1208 104 32"><rect x="649.9" y="1213.4" width="28.4" height="21.4" fill="none" stroke="#454545" stroke-width="1.8"/><polygon points="657,1221.2 671.4,1221.2 664.2,1228.6" fill="none" stroke="#454545" stroke-width="1.7" stroke-linejoin="miter"/><polygon points="713,1215 733.8,1215 743,1224 733.8,1233 713,1233" fill="#1f7ff6"/></svg>
<div class="ab" style="left:1818.2px;top:1253px;width:1.7px;height:229px;background:#9c9c9c"></div>
<div class="ab t " style="left:651.43px;top:1438.7px;font-size:22px;color:#111;line-height:30px;transform:scaleX(1.0555);transform-origin:0 50%;">Auto</div>
<svg class="ab" style="left:704px;top:1436px" width="120" height="36" viewBox="704 1436 120 36"><g fill="none" stroke="#3c3c3c" stroke-width="2.3" stroke-linejoin="miter"><polyline points="710.6,1451.2 716.3,1445.6 722,1451.2"/><polyline points="710.6,1457.8 716.3,1463.4 722,1457.8"/></g><path d="M737 1440V1466" stroke="#bdbdbd" stroke-width="1.6"/><g fill="none" stroke="#bcbcbc" stroke-width="1.5"><path d="M750.5 1453 Q765 1431.5 779.5 1453 Q765 1474.5 750.5 1453 Z"/><circle cx="765" cy="1453" r="4.6"/><circle cx="807" cy="1453" r="12"/><path d="M807 1450.5V1460.5" stroke-width="1.7"/></g><circle cx="807" cy="1446.5" r="1.2" fill="#bcbcbc"/></svg>
<div class="ab" style="left:1461.75px;top:1432px;width:342.75px;height:40px;border-radius:8px;border:2px solid #b9b9b9;background:#fff"></div>
<svg class="ab" style="left:1470px;top:1439px" width="30" height="30" viewBox="0 0 30 30"><circle cx="15" cy="14.9" r="12" fill="none" stroke="#787878" stroke-width="2"/><path d="M7.7 15.6 A7.3 7.3 0 0 1 22.3 15.6 Z" fill="#7f7f7f"/></svg>
<div class="ab t " style="left:1506.21px;top:1440.2px;font-size:22px;color:#939393;line-height:30px;transform:scaleX(1.0739);transform-origin:0 50%;">Filter</div>
<div class="ab t " style="left:1839.7px;top:1438.7px;font-size:22px;color:#111;line-height:30px;transform:scaleX(1.0871);transform-origin:0 50%;">All Output</div>
<svg class="ab" style="left:1948px;top:1438px" width="24" height="34" viewBox="1948 1438 24 34"><g fill="none" stroke="#3c3c3c" stroke-width="2.3"><polyline points="1953,1451.8 1958.8,1446 1964.6,1451.8"/><polyline points="1953,1458.2 1958.8,1464 1964.6,1458.2"/></g></svg>
<svg class="ab" style="left:2538px;top:1434px" width="126" height="38" viewBox="2538 1434 126 38"><g fill="none" stroke="#858585" stroke-width="1.8"><path d="M2542 1443H2568M2550.8 1443V1439H2559.2V1443M2544.6 1443 L2546.4 1467.2 H2563.6 L2565.4 1443"/><path d="M2551 1446.5V1464M2555 1446.5V1464M2559 1446.5V1464" stroke-width="1.4"/></g><path d="M2583 1440V1466" stroke="#bdbdbd" stroke-width="1.6"/><g fill="none" stroke="#1f7ff6" stroke-width="3.6"><rect x="2595.8" y="1439.8" width="26.4" height="26.4"/><rect x="2631.8" y="1439.8" width="26.4" height="26.4"/></g><rect x="2600" y="1444" width="4" height="18" fill="#1f7ff6"/><rect x="2650" y="1444" width="4" height="18" fill="#1f7ff6"/></svg>
</div></div></body></html>
